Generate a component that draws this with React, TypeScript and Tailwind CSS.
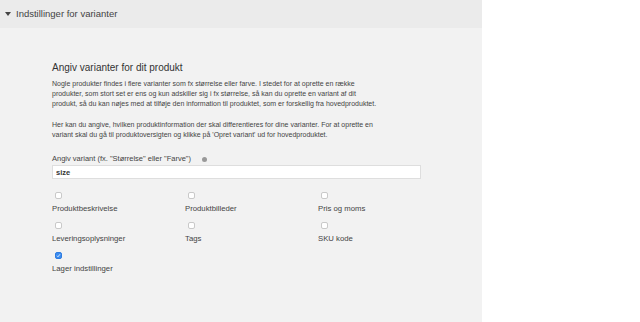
import { useState } from "react";

const options = [
  { id: "desc", label: "Produktbeskrivelse", checked: false },
  { id: "images", label: "Produktbilleder", checked: false },
  { id: "price", label: "Pris og moms", checked: false },
  { id: "delivery", label: "Leveringsoplysninger", checked: false },
  { id: "tags", label: "Tags", checked: false },
  { id: "sku", label: "SKU kode", checked: false },
  { id: "stock", label: "Lager indstillinger", checked: true },
];

function Box({ checked, onClick }: { checked: boolean; onClick: () => void }) {
  return (
    <button
      onClick={onClick}
      className={
        checked
          ? "w-[7px] h-[7px] rounded-[2px] bg-[#3b8cf0] border border-[#2f7ce0] flex items-center justify-center ml-[3px]"
          : "w-[7px] h-[7px] rounded-[2px] bg-white border border-[#c9c9c9] ml-[3px]"
      }
    >
      {checked && (
        <svg width="5" height="5" viewBox="0 0 10 10">
          <path d="M2 5.5 L4 7.5 L8 2.5" fill="none" stroke="white" strokeWidth="1.6" />
        </svg>
      )}
    </button>
  );
}

export default function App() {
  const [variant, setVariant] = useState("size");
  const [opts, setOpts] = useState(options);

  return (
    <div className="w-[640px] h-[322px] bg-white flex font-['Liberation_Sans',Arial,sans-serif] text-[#333]">
      <div className="w-[482px] bg-[#f2f2f2] flex flex-col">
        {/* Header */}
        <div className="h-[28px] bg-[#ebebeb] flex items-center pl-[5px] gap-[5px]">
          <svg width="6" height="4" viewBox="0 0 6 4">
            <path d="M0 0 L6 0 L3 4 Z" fill="#444" />
          </svg>
          <span className="text-[9.5px] text-[#444]">Indstillinger for varianter</span>
        </div>

        {/* Content */}
        <div className="pl-[52px] pt-[34px] pr-[62px]">
          <h2 className="text-[10px] leading-[12px] text-[#333]">Angiv varianter for dit produkt</h2>

          <p className="mt-[5px] text-[7px] leading-[10px] text-[#444]">
            Nogle produkter findes i flere varianter som fx størrelse eller farve. I stedet for at oprette en række
            <br />
            produkter, som stort set er ens og kun adskiller sig i fx størrelse, så kan du oprette en variant af dit
            <br />
            produkt, så du kan nøjes med at tilføje den information til produktet, som er forskellig fra hovedproduktet.
          </p>

          <p className="mt-[11px] text-[7px] leading-[10px] text-[#444]">
            Her kan du angive, hvilken produktinformation der skal differentieres for dine varianter. For at oprette en
            <br />
            variant skal du gå til produktoversigten og klikke på 'Opret variant' ud for hovedproduktet.
          </p>

          <div className="mt-[14px] flex items-center gap-[11px] text-[7.5px] leading-[10px] text-[#444]">
            <span>Angiv variant (fx. "Størrelse" eller "Farve")</span>
            <span className="w-[5px] h-[5px] rounded-full bg-[#999]" />
          </div>
          <input
            value={variant}
            onChange={(e) => setVariant(e.target.value)}
            className="block mt-[1px] w-[369px] h-[14px] bg-white border border-[#dedede] px-[3px] text-[7.5px] font-bold text-[#333] outline-none"
          />

          <div className="mt-[13px] grid grid-cols-[133px_133px_1fr] gap-y-[8px]">
            {opts.map((o) => (
              <div key={o.id} className="flex flex-col gap-[5px]">
                <Box
                  checked={o.checked}
                  onClick={() =>
                    setOpts(opts.map((x) => (x.id === o.id ? { ...x, checked: !x.checked } : x)))
                  }
                />
                <span className="text-[7.75px] leading-[10px] text-[#444]">{o.label}</span>
              </div>
            ))}
          </div>
        </div>
      </div>
    </div>
  );
}
